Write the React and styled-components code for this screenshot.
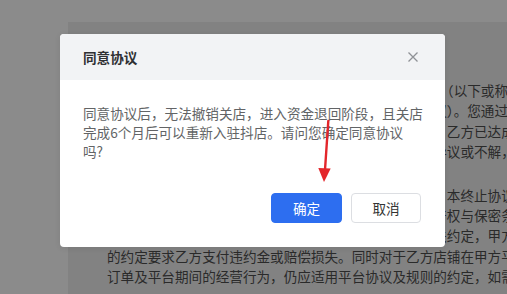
import React from "react";
import styled, { createGlobalStyle } from "styled-components";

const Global = createGlobalStyle`
  html, body { margin: 0; padding: 0; overflow: hidden; }
  body { font-family: "Noto Sans CJK SC", "Noto Sans", sans-serif; }
  * { box-sizing: border-box; }
`;

const Screen = styled.div`
  position: relative;
  width: 507px;
  height: 294px;
  overflow: hidden;
  background: #8b8b8b;
  padding: 22px 0 0 68px;
`;

const Paper = styled.div`
  width: 520px;
  height: 300px;
  background: #828282;
  padding: 58px 0 0 39px;
`;

const Para = styled.p`
  margin: 0 0 23px;
  white-space: pre;
  font-size: 13.6px;
  line-height: 20.4px;
  color: #2a2a2a;
`;

const Dialog = styled.div`
  position: absolute;
  left: 60px;
  top: 34px;
  width: 385px;
  height: 213px;
  background: #ffffff;
  border-radius: 4px;
  overflow: hidden;
  display: flex;
  flex-direction: column;
  box-shadow: 0 1px 6px rgba(0, 0, 0, 0.08);
`;

const Header = styled.div`
  height: 46px;
  background: #f2f3f5;
  display: flex;
  align-items: center;
  justify-content: space-between;
  padding: 0 27px 0 23px;
`;

const Title = styled.div`
  font-size: 13.6px;
  font-weight: 700;
  color: #2f3033;
`;

const Close = styled.button`
  width: 10px;
  height: 10px;
  padding: 0;
  border: 0;
  background: none;
  display: flex;
  cursor: pointer;
`;

const Body = styled.div`
  padding: 24px 22px 0 23px;
  font-size: 13.6px;
  line-height: 19px;
  color: #626466;
`;

const Footer = styled.div`
  margin-top: auto;
  display: flex;
  justify-content: flex-end;
  gap: 9px;
  padding: 0 24px 24px;
`;

const Button = styled.button`
  width: ${(p) => (p.$primary ? 71 : 70)}px;
  height: 30px;
  border-radius: 4px;
  font-family: "Noto Sans CJK SC", sans-serif;
  font-size: 13.6px;
  padding: 0;
  cursor: pointer;
  border: 1px solid ${(p) => (p.$primary ? "#2d6ef0" : "#dcdee2")};
  background: ${(p) => (p.$primary ? "#2d6ef0" : "#ffffff")};
  color: ${(p) => (p.$primary ? "#ffffff" : "#333333")};
`;

const Arrow = styled.svg`
  position: absolute;
  left: 310px;
  top: 115px;
`;

const p1 = [
  "欢迎您与抖店平台经营者签署《抖店关闭店铺协议》，您（以下或称乙方或",
  "商家）与甲方就关闭店铺相关事宜签署协议（下称本协议）。您通过页面",
  "点击同意按钮即视为您已充分阅读、理解并接受本协议，乙方已达成关店条件",
  "且双方均同意按本协议约定履行义务。如您对本协议有异议或不解，请及时联系",
].join("\n");

const p2 = [
  "甲乙双方一致确认，关店完成后双方权利义务即告终止，本终止协议另有约定的除外。",
  "关店后，乙方仍应继续遵守平台协议及规则中有关知识产权与保密条款的约定；",
  "如乙方违反上述义务，或违反平台协议及规则中其他相关约定，甲方有权依据平台协议",
  "的约定要求乙方支付违约金或赔偿损失。同时对于乙方店铺在甲方平台上产生的",
  "订单及平台期间的经营行为，仍应适用平台协议及规则的约定，如需处理的",
].join("\n");

export default function App() {
  return (
    <>
      <Global />
      <Screen>
        <Paper>
          <Para>{p1}</Para>
          <Para>{p2}</Para>
        </Paper>
        <Dialog>
          <Header>
            <Title>同意协议</Title>
            <Close aria-label="关闭">
              <svg width="10" height="10" viewBox="0 0 10 10">
                <path d="M0.5 0.5 L9.5 9.5 M9.5 0.5 L0.5 9.5" stroke="#8f9196" strokeWidth="1.3" fill="none" />
              </svg>
            </Close>
          </Header>
          <Body>
            同意协议后，无法撤销关店，进入资金退回阶段，且关店
            <br />
            完成6个月后可以重新入驻抖店。请问您确定同意协议
            <br />
            吗?
          </Body>
          <Footer>
            <Button $primary>确定</Button>
            <Button>取消</Button>
          </Footer>
        </Dialog>
        <Arrow width="30" height="72" viewBox="0 0 30 72">
          <path d="M18.3 6 L15 55" stroke="#e3262b" strokeWidth="2.4" strokeLinecap="round" />
          <path d="M8.3 53 L20.7 53.5 L14 67 Z" fill="#e3262b" />
        </Arrow>
      </Screen>
    </>
  );
}
